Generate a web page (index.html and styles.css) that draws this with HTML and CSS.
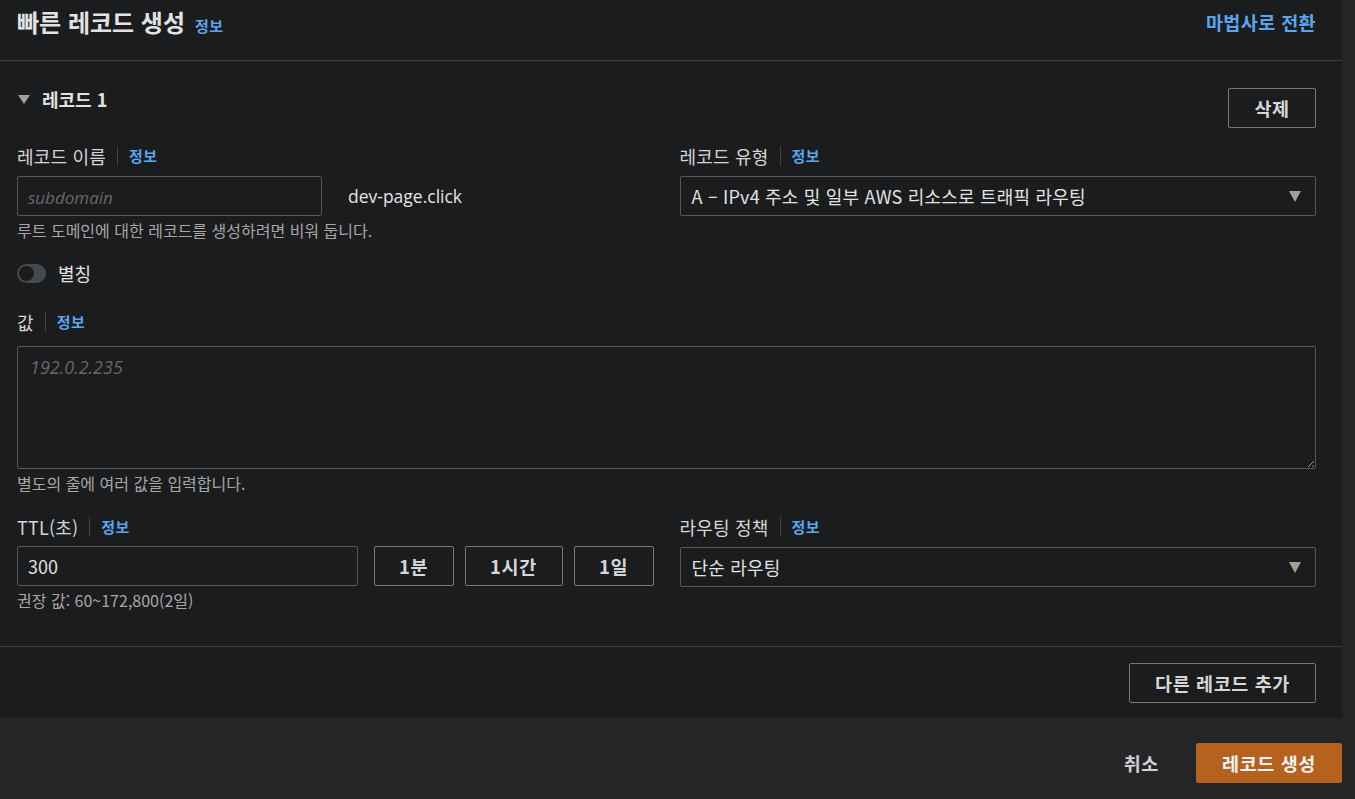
FILE: index.html
```html
<!DOCTYPE html>
<html lang="ko">
<head>
<meta charset="utf-8">
<title>빠른 레코드 생성</title>
<link rel="stylesheet" href="styles.css">
</head>
<body>
<div class="page">
  <section class="card">
    <header class="card-header">
      <h1 class="title">빠른 레코드 생성 <a class="info">정보</a></h1>
      <a class="switch">마법사로 전환</a>
    </header>
    <div class="card-body">
      <div class="record-head">
        <div class="expander"><span class="caret"></span>레코드 1</div>
        <button class="btn btn-delete">삭제</button>
      </div>

      <div class="grid two first">
        <div class="field">
          <div class="label">레코드 이름<span class="sep"></span><a class="info">정보</a></div>
          <div class="name-row">
            <input class="input name-input" type="text" placeholder="subdomain">
            <span class="suffix">dev-page.click</span>
          </div>
          <div class="help">루트 도메인에 대한 레코드를 생성하려면 비워 둡니다.</div>
        </div>
        <div class="field">
          <div class="label">레코드 유형<span class="sep"></span><a class="info">정보</a></div>
          <div class="select"><span>A – IPv4 주소 및 일부 AWS 리소스로 트래픽 라우팅</span><span class="arrow"></span></div>
        </div>
      </div>

      <div class="toggle-row">
        <span class="toggle"><span class="knob"></span></span>
        <span class="toggle-label">별칭</span>
      </div>

      <div class="field value-field">
        <div class="label">값<span class="sep"></span><a class="info">정보</a></div>
        <textarea class="textarea" placeholder="192.0.2.235"></textarea>
        <div class="help">별도의 줄에 여러 값을 입력합니다.</div>
      </div>

      <div class="grid two ttl-grid">
        <div class="field">
          <div class="label">TTL(초)<span class="sep"></span><a class="info">정보</a></div>
          <div class="ttl-row">
            <input class="input ttl-input" type="text" value="300">
            <button class="btn btn-min">1분</button>
            <button class="btn btn-hour">1시간</button>
            <button class="btn btn-day">1일</button>
          </div>
          <div class="help">권장 값: 60~172,800(2일)</div>
        </div>
        <div class="field">
          <div class="label">라우팅 정책<span class="sep"></span><a class="info">정보</a></div>
          <div class="select"><span>단순 라우팅</span><span class="arrow"></span></div>
        </div>
      </div>
    </div>
    <footer class="card-footer">
      <button class="btn btn-add">다른 레코드 추가</button>
    </footer>
  </section>
  <div class="actions">
    <button class="link-btn">취소</button>
    <button class="btn btn-primary">레코드 생성</button>
  </div>
</div>
</body>
</html>
```
FILE: styles.css
```css
* { box-sizing: border-box; }
html { color-scheme: dark; }
html, body { margin: 0; padding: 0; }
body {
  background: #232527;
  font-family: "Noto Sans CJK KR", "Open Sans", sans-serif;
  color: #d5d6d7;
  width: 1355px;
  height: 799px;
  overflow: hidden;
}
.page { width: 1355px; }
.card { width: 1342px; background: #1b1c1e; }

.card-header {
  height: 61px;
  border-bottom: 1px solid #3e3f41;
  padding: 8px 26px 0 17px;
  display: flex;
  justify-content: space-between;
  align-items: flex-start;
}
.title {
  margin: 0;
  font-size: 24px;
  font-weight: 700;
  line-height: 28px;
  color: #e1e2e3;
  display: flex;
  align-items: baseline;
  gap: 10px;
}
.info {
  color: #5aa6ee;
  font-size: 15px;
  letter-spacing: 0.5px;
  font-weight: 700;
  cursor: pointer;
}
.switch {
  color: #5aa6ee;
  font-size: 18.5px;
  letter-spacing: 0.4px;
  font-weight: 700;
  line-height: 28px;
}

.card-body { padding: 27px 26px 36px 17px; }

.record-head {
  display: flex;
  justify-content: space-between;
  align-items: flex-start;
  height: 40px;
}
.expander {
  display: flex;
  align-items: center;
  gap: 12px;
  font-size: 18px;
  font-weight: 700;
  line-height: 22px;
  color: #e1e2e3;
}
.caret {
  width: 0;
  height: 0;
  margin-left: 1px;
  border-left: 6px solid transparent;
  border-right: 6px solid transparent;
  border-top: 9px solid #a59f97;
}

.btn {
  height: 40px;
  background: transparent;
  border: 1px solid #7d776f;
  border-radius: 2px;
  color: #d6d6d6;
  font-family: "Noto Sans CJK KR", "Open Sans", sans-serif;
  font-size: 18.5px;
  letter-spacing: 0.6px;
  font-weight: 700;
  padding: 0;
  cursor: pointer;
}
.btn-delete { width: 88px; }

.grid.two {
  display: grid;
  grid-template-columns: 1fr 1fr;
  column-gap: 26px;
}
.grid.first { margin-top: 17px; }
.ttl-grid { margin-top: 23px; }

.label {
  display: flex;
  align-items: center;
  height: 22px;
  font-size: 18px;
  letter-spacing: 0.2px;
  line-height: 22px;
  color: #d5d6d7;
}
.sep {
  width: 1px;
  height: 20px;
  background: #414244;
  margin: 0 11px;
}

.name-row {
  display: flex;
  align-items: center;
  margin-top: 9px;
}
.input {
  height: 40px;
  background: #1b1c1e;
  border: 1px solid #55575a;
  border-radius: 2px;
  padding: 0 10px;
  font-family: "Noto Sans CJK KR", "Open Sans", sans-serif;
  font-size: 18px;
  color: #e1e2e3;
  outline: none;
}
.input::placeholder,
.textarea::placeholder {
  font-family: "Open Sans", sans-serif;
  font-style: italic;
  color: #66686a;
}
.input::placeholder { font-size: 17px; }
.textarea::placeholder { font-size: 18px; }
.name-input { width: 305px; }
.suffix {
  margin-left: 26px;
  font-family: "Open Sans", sans-serif;
  font-size: 17.5px;
  color: #e4e4e4;
}

.help {
  margin-top: 4px;
  font-size: 16px;
  line-height: 20px;
  color: #a6a7a8;
}

.select {
  margin-top: 9px;
  height: 40px;
  border: 1px solid #55575a;
  border-radius: 2px;
  display: flex;
  align-items: center;
  justify-content: space-between;
  padding: 0 14px 0 11px;
  font-size: 18px;
  letter-spacing: 0.2px;
  color: #e1e2e3;
}
.arrow {
  width: 0;
  height: 0;
  border-left: 6px solid transparent;
  border-right: 6px solid transparent;
  border-top: 11px solid #a59f97;
}

.toggle-row {
  margin-top: 22px;
  height: 22px;
  display: flex;
  align-items: center;
  gap: 12px;
}
.toggle {
  width: 29px;
  height: 19px;
  border-radius: 10px;
  background: #474a4d;
  display: flex;
  align-items: center;
  padding-left: 2px;
}
.knob {
  width: 15px;
  height: 15px;
  border-radius: 50%;
  background: #1b1c1e;
}
.toggle-label {
  font-size: 18px;
  line-height: 22px;
  color: #e1e2e3;
}

.value-field { margin-top: 27px; }
.textarea {
  display: block;
  width: 100%;
  height: 123px;
  margin-top: 13px;
  background: #1b1c1e;
  border: 1px solid #55575a;
  border-radius: 2px;
  padding: 8px 12px;
  font-size: 18px;
  line-height: 24px;
  color: #e1e2e3;
  resize: vertical;
  outline: none;
}

.ttl-row {
  display: flex;
  align-items: center;
  margin-top: 8px;
}
.ttl-input { flex: 1; }
.btn-min { width: 80px; margin-left: 16px; }
.btn-hour { width: 98px; margin-left: 11px; }
.btn-day { width: 80px; margin-left: 11px; }

.card-footer {
  border-top: 1px solid #3e3f41;
  padding: 16px 26px 15px 17px;
  display: flex;
  justify-content: flex-end;
}
.btn-add { width: 187px; }

.actions {
  margin-top: 25px;
  width: 1342px;
  display: flex;
  justify-content: flex-end;
  align-items: center;
  gap: 17px;
}
.link-btn {
  background: none;
  border: none;
  padding: 0 20px;
  font-family: "Noto Sans CJK KR", "Open Sans", sans-serif;
  font-size: 18.5px;
  letter-spacing: 0.6px;
  font-weight: 700;
  color: #cfd0d1;
  height: 40px;
  cursor: pointer;
}
.btn-primary {
  width: 146px;
  background: #b5621f;
  border-color: #b5621f;
  color: #f3f3f3;
}
```
